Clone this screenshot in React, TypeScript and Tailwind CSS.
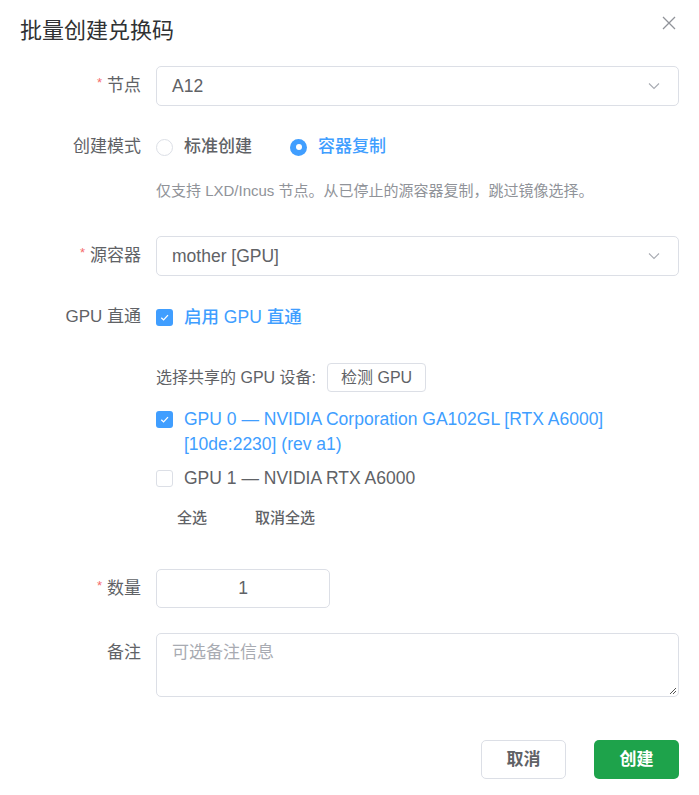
import React from "react";

const font = { fontFamily: '"Liberation Sans", Arial, "Noto Sans CJK SC", sans-serif' };

function Chevron() {
  return (
    <svg width="16" height="16" viewBox="0 0 16 16" fill="none" stroke="#a8abb2" strokeWidth="1.1">
      <path d="M3 5.5 L8 10.5 L13 5.5" />
    </svg>
  );
}

function Check() {
  return (
    <svg width="11" height="11" viewBox="0 0 12 12" fill="none" stroke="#fff" strokeWidth="1.4">
      <path d="M2.5 6.2 L5 8.6 L9.8 3.4" />
    </svg>
  );
}

function Label({ req, children }: { req?: boolean; children: React.ReactNode }) {
  return (
    <div className="w-[136px] shrink-0 pr-[15px] flex justify-end items-center h-10 text-[17px] text-[#606266]">
      {req && <span className="text-[#f56c6c] text-[13px] mr-[5px] -mt-[6px]">*</span>}
      {children}
    </div>
  );
}

export default function App() {
  return (
    <div className="w-[699px] h-[795px] bg-white px-5 relative" style={font}>
      <div className="h-[66px] pt-[18px]">
        <div className="text-[22px] leading-[26px] text-[#303133]">批量创建兑换码</div>
      </div>
      <button className="absolute left-[660px] top-[14px] w-[18px] h-[18px] flex items-center justify-center">
        <svg width="14" height="14" viewBox="0 0 14 14" stroke="#909399" strokeWidth="1.3">
          <path d="M1 1 L13 13 M13 1 L1 13" />
        </svg>
      </button>

      {/* 节点 */}
      <div className="flex">
        <Label req>节点</Label>
        <div className="flex-1 h-10 border border-[#dcdfe6] rounded-[5px] flex items-center justify-between pl-[15px] pr-[16px] text-[17.5px] text-[#606266]">
          <span>A12</span>
          <Chevron />
        </div>
      </div>

      {/* 创建模式 */}
      <div className="flex mt-[21px]">
        <Label>创建模式</Label>
        <div className="flex items-center h-10 text-[17px]">
          <div className="flex items-center">
            <span className="w-[17px] h-[17px] rounded-full border border-[#dcdfe6] bg-white" />
            <span className="ml-[11px] text-[#606266] font-medium">标准创建</span>
          </div>
          <div className="flex items-center ml-[38px]">
            <span className="w-[17px] h-[17px] rounded-full bg-[#409eff] flex items-center justify-center">
              <span className="w-[6px] h-[6px] rounded-full bg-white" />
            </span>
            <span className="ml-[11px] text-[#409eff] font-medium">容器复制</span>
          </div>
        </div>
      </div>
      <div className="pl-[136px] mt-[12px] text-[15px] leading-[24px] text-[#909399]">
        仅支持 LXD/Incus 节点。从已停止的源容器复制，跳过镜像选择。
      </div>

      {/* 源容器 */}
      <div className="flex mt-[33px]">
        <Label req>源容器</Label>
        <div className="flex-1 h-10 border border-[#dcdfe6] rounded-[5px] flex items-center justify-between pl-[15px] pr-[16px] text-[17.5px] text-[#606266]">
          <span>mother [GPU]</span>
          <Chevron />
        </div>
      </div>

      {/* GPU 直通 */}
      <div className="flex mt-[21px]">
        <Label>GPU 直通</Label>
        <div className="flex items-center h-10 text-[17.5px]">
          <span className="w-[17px] h-[17px] rounded-[3px] bg-[#409eff] flex items-center justify-center">
            <Check />
          </span>
          <span className="ml-[11px] text-[#409eff] font-medium">启用 GPU 直通</span>
        </div>
      </div>

      <div className="pl-[136px] mt-[26px]">
        <div className="flex items-center h-[29px] text-[16px] text-[#606266]">
          <span>选择共享的 GPU 设备:</span>
          <button className="ml-[11px] h-[29px] px-[13px] border border-[#dcdfe6] rounded-[4px] text-[16px] text-[#606266] bg-white">
            检测 GPU
          </button>
        </div>
        <div className="flex mt-[15px] text-[17.5px] leading-[25px]">
          <span className="w-[17px] h-[17px] mt-[4px] shrink-0 rounded-[3px] bg-[#409eff] flex items-center justify-center">
            <Check />
          </span>
          <span className="ml-[11px] text-[#409eff] w-[440px]">
            GPU 0 — NVIDIA Corporation GA102GL [RTX A6000] [10de:2230] (rev a1)
          </span>
        </div>
        <div className="flex mt-[9px] text-[17.5px] leading-[25px]">
          <span className="w-[17px] h-[17px] mt-[4px] shrink-0 rounded-[3px] border border-[#dcdfe6] bg-white" />
          <span className="ml-[11px] text-[#606266]">GPU 1 — NVIDIA RTX A6000</span>
        </div>
        <div className="flex mt-[15px] h-[24px] items-center text-[15px] text-[#606266] font-medium">
          <span className="ml-[21px]">全选</span>
          <span className="ml-[48px]">取消全选</span>
        </div>
      </div>

      {/* 数量 */}
      <div className="flex mt-[39px]">
        <Label req>数量</Label>
        <div className="w-[174px] h-[39px] border border-[#dcdfe6] rounded-[5px] flex items-center justify-center text-[17.5px] text-[#606266]">
          1
        </div>
      </div>

      {/* 备注 */}
      <div className="flex mt-[24px]">
        <Label>备注</Label>
        <div className="flex-1 h-[64px] border border-[#dcdfe6] rounded-[5px] relative pl-[15px] pt-[8px] text-[17px] text-[#a8abb2] leading-[22px]">
          可选备注信息
          <svg className="absolute right-[1px] bottom-[1px]" width="9" height="9" viewBox="0 0 9 9" stroke="#555" strokeWidth="1">
            <path d="M8 2 L2 8 M8 5 L5 8" />
          </svg>
        </div>
      </div>

      {/* footer */}
      <div className="flex justify-end mt-[43px] gap-[28px]">
        <button className="w-[85px] h-[39px] border border-[#dcdfe6] rounded-[5px] text-[17px] text-[#606266] font-bold bg-white">
          取消
        </button>
        <button className="w-[85px] h-[39px] rounded-[5px] text-[17px] text-white font-bold bg-[#1ea34b]">
          创建
        </button>
      </div>
    </div>
  );
}
